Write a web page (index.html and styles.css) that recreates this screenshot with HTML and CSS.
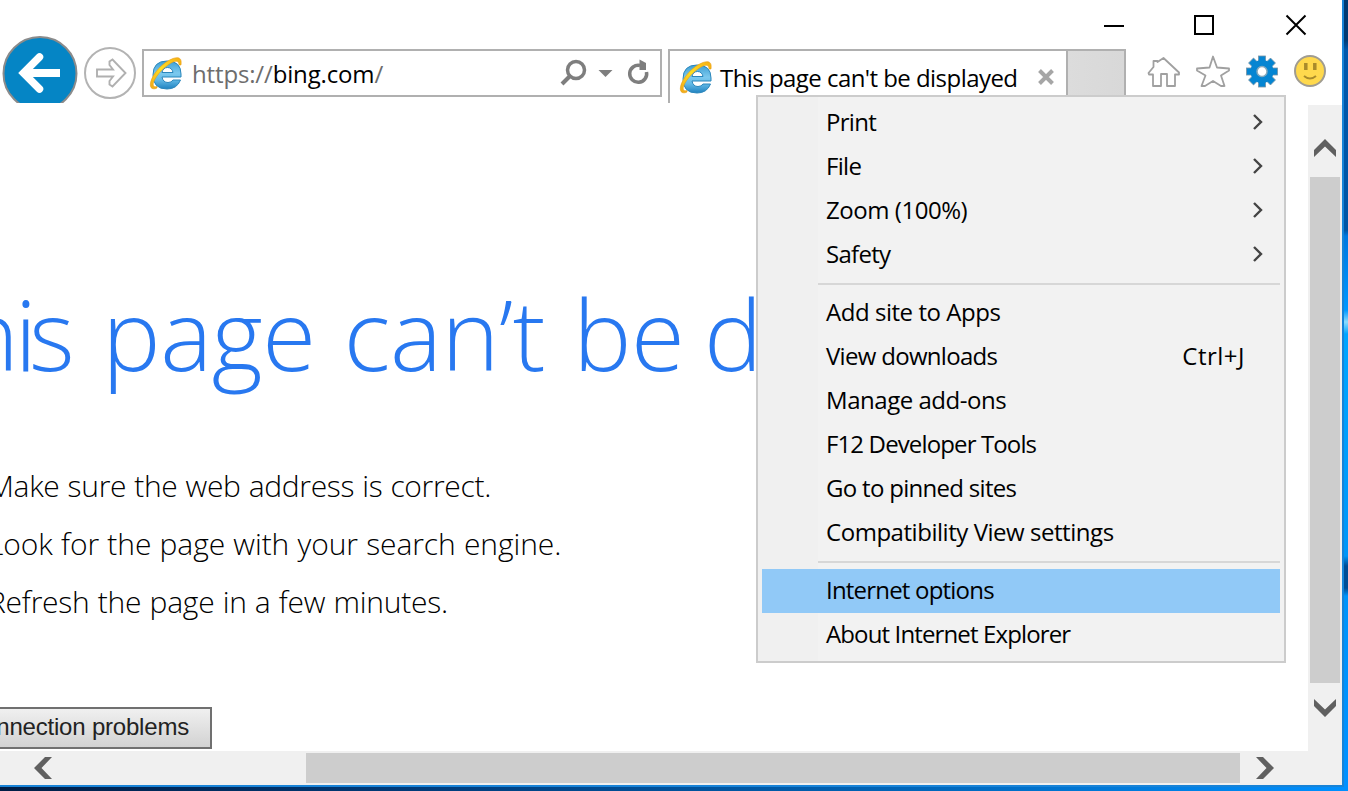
FILE: index.html
```html
<!DOCTYPE html>
<html lang="en">
<head>
<meta charset="utf-8">
<title>This page can't be displayed</title>
<link rel="stylesheet" href="styles.css">
</head>
<body>
<svg class="defs" width="0" height="0">
  <defs>
    <linearGradient id="ie-blue" gradientUnits="userSpaceOnUse" x1="0" y1="5" x2="0" y2="32"><stop offset="0" stop-color="#3d9fd3"/><stop offset=".45" stop-color="#7cc9ee"/><stop offset=".7" stop-color="#62b9e6"/><stop offset="1" stop-color="#2788c4"/></linearGradient>
    <linearGradient id="ie-gold" x1="0" y1="1" x2="1" y2="0"><stop offset="0" stop-color="#f0a818"/><stop offset=".5" stop-color="#ffdf20"/><stop offset="1" stop-color="#f5ae13"/></linearGradient>
    <symbol id="ie" viewBox="0 0 34 34">
      <path d="M32 21H13Q14 26.500 19 26.500Q22.500 26.500 24 24H31.500Q28 33 18 33Q4 33 4 19Q4 5 18 5Q32 5 32 18ZM13 16.500H24Q23 11.500 18.500 11.500Q14 11.500 13 16.500Z" fill="url(#ie-blue)" stroke="#2b86bb" stroke-width="1"/>
      <path d="M8 32C4 34 .5 32.500 1.500 27C3 18 14 6 24 2.500C30 .5 33 2 32 9H30C30 5.500 28 4.500 24 6C17 9 7 19 4.500 26.500C3.500 30 5 31.500 8 30.500Z" fill="url(#ie-gold)" stroke="#e79a15" stroke-width=".6"/>
    </symbol>
    <symbol id="chevron" viewBox="0 0 10 16"><path d="M1 1L8 8L1 15" fill="none" stroke="#444" stroke-width="2.4"/></symbol>
  </defs>
</svg>
<div class="window">
  <header class="chrome">
    <svg class="back" width="76" height="67" viewBox="0 0 76 67"><circle cx="38" cy="37.500" r="36.500" fill="#0585c5" stroke="#8b8b8b" stroke-width="2"/><path d="M58 37H22" stroke="#fff" stroke-width="8"/><path d="M37.500 21L21.500 37L37.500 53" fill="none" stroke="#fff" stroke-width="7.500" stroke-linecap="round"/></svg>
    <svg class="forward" width="52" height="52" viewBox="0 0 52 52"><circle cx="26" cy="26" r="25" fill="#fff" stroke="#b3b3b3" stroke-width="2"/><path d="M13 22.500H29L25.500 18V14.500L28.500 12.500L41.500 26L28.500 39.500L25.500 37.500V34L29 29.500H13Z" fill="none" stroke="#b0b0b0" stroke-width="1.900"/></svg>
    <div class="address">
      <svg class="ie" width="34" height="34"><use href="#ie"/></svg>
      <span class="url">https://<b>bing.com</b>/</span>
      <svg class="tools" width="90" height="30" viewBox="0 0 90 30" fill="none" stroke="#7e7e7e"><circle cx="16" cy="12" r="8.500" stroke-width="3.500"/><path d="M10 18L2 26" stroke-width="4"/><path d="M38.500 12H52.500L45.500 19Z" fill="#7e7e7e" stroke="none"/><path d="M86.500 14A8.500 8.500 0 1 1 80 7.500" stroke-width="3.500"/><path d="M79.500 1.500L86 5V12H79.500Z" fill="#7e7e7e" stroke="none"/></svg>
    </div>
    <div class="tab">
      <svg class="ie" width="34" height="34"><use href="#ie"/></svg>
      <span class="tab-title">This page can't be displayed</span>
      <svg class="tab-close" width="16" height="16" viewBox="0 0 16 16"><path d="M1.500 1.500L14.500 14.500M14.500 1.500L1.500 14.500" stroke="#a6a6a6" stroke-width="4"/></svg>
    </div>
    <div class="new-tab"></div>
    <div class="commands">
      <svg width="34" height="34" viewBox="0 0 34 34" fill="#fff" stroke="#a0a0a0" stroke-width="1.800"><path d="M1.500 18L6.500 12V6H10.500V7L16.500 3L32 17.500V19.500H28V31H20V19H14V31H6V19.500H2Z" stroke-linejoin="round"/></svg>
      <svg width="34" height="34" viewBox="0 0 34 34" fill="#fff" stroke="#a0a0a0" stroke-width="1.800"><path d="M17 1.500L21 12.500L33 13.500V15.500L25 20.500L28.500 31H25L17 26L9 31H5.500L9.500 20.500L1 15.500V13.500L13.500 12.500Z" stroke-linejoin="round"/></svg>
      <svg width="34" height="34" viewBox="-17 -16.500 34 34"><g fill="#0585d2" stroke="#7793a5" stroke-width=".8"><g id="teeth"><rect x="-3.500" y="-15.500" width="7" height="31"/><rect x="-15.500" y="-3.500" width="31" height="7"/></g><use href="#teeth" transform="rotate(45)"/></g><circle r="11.500" fill="#0585d2"/><circle r="5" fill="#fff" stroke="#85a9bd" stroke-width="1.500"/></svg>
      <svg width="34" height="34" viewBox="0 0 34 34"><circle cx="16" cy="16" r="15" fill="#ffd94d" stroke="#a09c91" stroke-width="2"/><path d="M11.800 8V15M20.800 8V15" stroke="#a98b2b" stroke-width="3.500"/><path d="M10 21Q16 26 22 21" fill="none" stroke="#a98b2b" stroke-width="2"/></svg>
    </div>
    <svg class="caption" width="204" height="22" viewBox="0 0 204 22" fill="none" stroke="#000" stroke-width="2"><path d="M0 12H20"/><rect x="91" y="2" width="18" height="18"/><path d="M182.500 1.500L201.500 20.500M201.500 1.500L182.500 20.500"/></svg>
  </header>
  <div class="viewport">
    <main class="page">
      <h1>T<span class="kern-h">h</span><span class="kern-i">i</span>s page can’t be<span class="kern-space"> </span>displayed</h1>
      <ul class="hints">
        <li>Make sure the web address is correct.</li>
        <li class="wide">Look for the page with your search engine.</li>
        <li class="mid">Refresh the page in a few minutes.</li>
      </ul>
      <button class="fix">Fix connection problems</button>
    </main>
    <div class="vscroll">
      <svg width="22" height="18" viewBox="0 0 22 18"><path d="M0 11L11 0L22 11V18L11 7.500L0 18Z" fill="#606060"/></svg>
      <div class="vthumb"></div>
      <svg width="22" height="18" viewBox="0 0 22 18"><path d="M0 0L11 10.500L22 0V7L11 18L0 7Z" fill="#606060"/></svg>
    </div>
  </div>
  <div class="hscroll">
    <svg width="18" height="22" viewBox="0 0 18 22"><path d="M18 0L7.500 11L18 22H11L0 11L11 0Z" fill="#606060"/></svg>
    <div class="hthumb"></div>
    <svg width="18" height="22" viewBox="0 0 18 22"><path d="M0 0L10.500 11L0 22H7L18 11L7 0Z" fill="#606060"/></svg>
  </div>
</div>
<nav class="menu">
  <div class="item"><span>Print</span><svg width="10" height="16"><use href="#chevron"/></svg></div>
  <div class="item"><span>File</span><svg width="10" height="16"><use href="#chevron"/></svg></div>
  <div class="item loose"><span>Zoom (100%)</span><svg width="10" height="16"><use href="#chevron"/></svg></div>
  <div class="item"><span>Safety</span><svg width="10" height="16"><use href="#chevron"/></svg></div>
  <div class="rule"></div>
  <div class="item loose"><span>Add site to Apps</span></div>
  <div class="item"><span>View downloads</span><span class="key">Ctrl+J</span></div>
  <div class="item loose"><span>Manage add-ons</span></div>
  <div class="item tight"><span>F12 Developer Tools</span></div>
  <div class="item"><span>Go to pinned sites</span></div>
  <div class="item loose"><span>Compatibility View settings</span></div>
  <div class="rule"></div>
  <div class="item selected"><span>Internet options</span></div>
  <div class="item tight"><span>About Internet Explorer</span></div>
</nav>
</body>
</html>
```
FILE: styles.css
```css
* { box-sizing: border-box; }
body {
  margin: 0;
  width: 1348px;
  height: 791px;
  overflow: hidden;
  position: relative;
  font-family: "Open Sans", "Noto Sans", sans-serif;
  background:
    linear-gradient(90deg, #001d45, #003a78 30%, #0068bd 70%, #0090ff) 0 787px / 100% 4px no-repeat,
    linear-gradient(#003a73 0, #003a73 40px, #0058ac 50px, #0055a5 230px, #0078e0 236px, #0098ff 310px, #8bdcff 322px, #00a5ff 334px, #0096f8 556px, #004d96 566px, #004d96 588px, #0094fa 596px, #0090ff 100%);
}
svg { display: block; flex: none; }
.defs { position: absolute; }
.window {
  width: 1344px;
  height: 787px;
  border: solid #1883d7;
  border-width: 0 2px 2px 0;
  background: #fff;
  display: flex;
  flex-direction: column;
}
.chrome { position: relative; height: 103px; display: flex; align-items: flex-start; flex: none; padding-left: 2px; }
.back { margin-top: 36px; }
.forward { margin: 47px 6px 0; }
.address {
  width: 520px;
  height: 48px;
  margin-top: 49px;
  border: 2px solid #b0b0b0;
  display: flex;
  align-items: center;
  padding: 0 10px 0 5px;
}
.url { font-size: 24px; color: #6d6d6d; margin-left: 9px; letter-spacing: -.15px; flex: 1; }
.url b { font-weight: 400; color: #000; }
.tab {
  width: 398px;
  height: 54px;
  margin: 49px 0 0 6px;
  border: solid #b0b0b0;
  border-width: 2px 0 0 2px;
  display: flex;
  align-items: center;
  padding: 1px 0 0 9px;
}
.tab .ie { margin-top: -2px; }
.tab-title { font-size: 24px; letter-spacing: -.55px; margin-left: 7px; width: 310px; white-space: nowrap; }
.tab-close { margin: -1px 0 0 8px; }
.new-tab { width: 60px; height: 48px; margin-top: 49px; border: 2px solid #b0b0b0; background: linear-gradient(90deg, #dcdcdc, #d8d8d8); }
.commands { display: flex; gap: 15px; margin: 55px 0 0 21px; }
.caption { position: absolute; left: 1104px; top: 14px; }
.viewport { display: flex; flex: 1; min-height: 0; }
.page { width: 1308px; overflow: hidden; }
h1 { margin: 163px 0 0 -90px; font-size: 98px; line-height: 134px; font-weight: 300; color: #2878f0; white-space: nowrap; letter-spacing: -.4px; word-spacing: 3px; }
.kern-h { letter-spacing: -4px; }
.kern-i { letter-spacing: -8px; }
.kern-space { letter-spacing: -9px; }
.hints { margin: 57px 0 0 -12px; padding: 0; list-style: none; font-size: 30px; line-height: 58px; font-weight: 300; letter-spacing: -.32px; word-spacing: .6px; color: #000; white-space: nowrap; }
.wide { letter-spacing: -.09px; }
.mid { letter-spacing: -.22px; }
.fix {
  display: block;
  margin: 76px 0 0 -100px;
  width: 312px;
  height: 42px;
  border: 2px solid #707070;
  border-radius: 0;
  background: linear-gradient(#f0f0f0, #d2d2d2);
  padding: 0 21px 3px 0;
  text-align: right;
  font: 24px "Liberation Sans", Arial, sans-serif;
  letter-spacing: -.2px;
  color: #222;
}
.vscroll { width: 34px; margin-top: 2px; background: #f0f0f0; display: flex; flex-direction: column; align-items: center; padding-top: 34px; }
.vscroll svg { margin-right: 1px; }
.vthumb { width: 30px; height: 506px; margin: 20px 0 16px; background: #cdcdcd; }
.hscroll { height: 34px; background: #f0f0f0; display: flex; align-items: center; padding-left: 34px; }
.hthumb { width: 934px; height: 30px; margin: 0 16px 0 254px; background: #cdcdcd; }
.menu {
  position: absolute;
  left: 756px;
  top: 95px;
  width: 530px;
  height: 568px;
  border: 2px solid #ccc;
  padding: 4px;
  background: linear-gradient(90deg, #f0f0f0 60px, #f2f2f2 60px);
}
.item { height: 44px; padding: 0 17px 0 64px; display: flex; align-items: center; justify-content: space-between; font-size: 24px; line-height: 40px; letter-spacing: -.7px; color: #000; white-space: nowrap; }
.item span { margin-top: -3px; }
.item svg { margin-top: -2px; }
.item .key { margin-right: 18px; letter-spacing: .5px; }
.loose { letter-spacing: -.46px; }
.tight { letter-spacing: -.87px; }
.rule { height: 2px; margin: 6px 0 6px 56px; background: #d7d7d7; }
.selected { background: #91c9f7; letter-spacing: -.8px; }
```
